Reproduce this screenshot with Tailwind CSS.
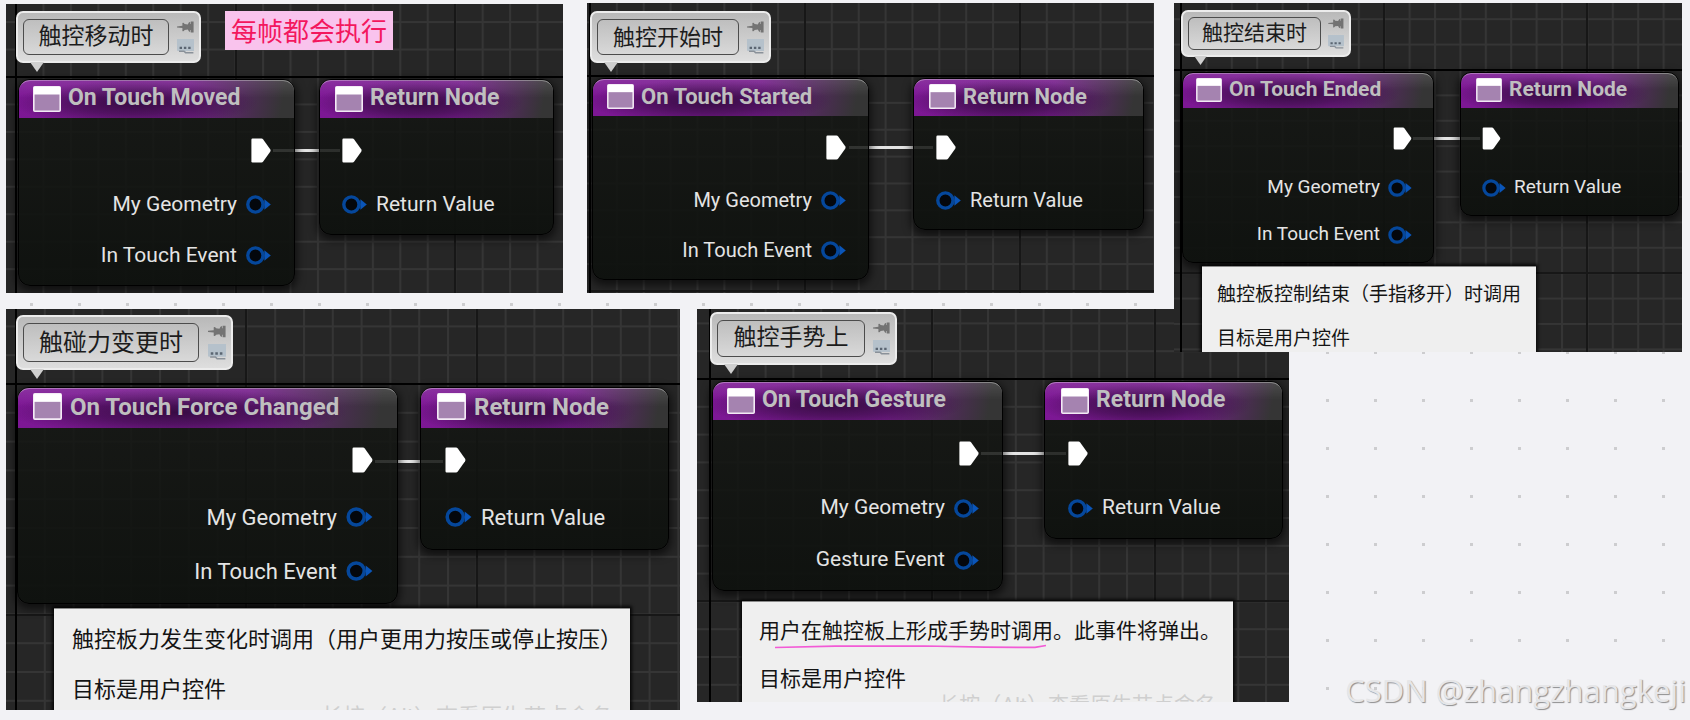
<!DOCTYPE html>
<html lang="zh-CN">
<head>
  <meta charset="UTF-8">
  <title>UMG Touch Events</title>
  <script src="https://cdn.jsdelivr.net/npm/@tailwindcss/browser@4"></script>
</head>
<body class="bg-[#f2f2f5] font-['Roboto','Noto_Sans_CJK_SC',sans-serif]">

  <!-- shared icons -->
  <svg class="hidden">
    <symbol id="window" viewBox="0 0 28 26">
      <rect x="0.8" y="0.8" width="26.4" height="24.4" rx="1" fill="#a583b0" stroke="#f3eaf5" stroke-width="1.6"/>
      <rect x="1" y="1" width="26" height="7.5" fill="#fff"/>
    </symbol>
    <symbol id="exec" viewBox="0 0 20 25">
      <path d="M1.5 .6H10.5Q11.5 .6 12.2 1.5L19.2 11.3Q20 12.5 19.2 13.7L12.2 23.5Q11.5 24.4 10.5 24.4H1.5Q.4 24.4 .4 23.2V1.8Q.4 .6 1.5 .6Z" fill="#fff"/>
    </symbol>
    <symbol id="pin" viewBox="0 0 25 19">
      <circle cx="9.4" cy="9.5" r="7.6" fill="#04070c" stroke="#05479b" stroke-width="3.4"/>
      <path d="M18.4 4.2V14.8L24.8 9.5Z" fill="#0a55b8"/>
    </symbol>
    <symbol id="pushpin" viewBox="0 0 17 12">
      <path d="M0 5.4L5.4 4.8V2Q6.6 1.2 7.6 3L10.8 3.4Q11.6 1 13.2 .8V3H13.8V.6H16.6V11.4H13.8V9H13.2V11.2Q11.6 11 10.8 8.6L7.6 9Q6.6 10.8 5.4 10V6.9L0 6.4Z" fill="#737373"/>
    </symbol>
    <symbol id="note" viewBox="0 0 17 15">
      <path d="M0 0H17V12H9L8 13.6 6.6 12H1Q0 12 0 11Z" fill="#b5c1cb"/>
      <path d="M2.6 7.8H5V10H2.6ZM6.9 7.8H9.3V10H6.9ZM11.2 7.8H13.6V10H11.2Z" fill="#5a6572"/>
      <path d="M2 12.2H7L8.6 13.8H16.4" fill="none" stroke="#8a9199" stroke-width="1.4"/>
    </symbol>
  </svg>

  <main class="relative min-h-screen overflow-hidden">
    <!-- dotted canvas -->
    <svg class="absolute inset-0 w-full h-full">
      <pattern id="dots" x="30" y="15" width="48" height="48" patternUnits="userSpaceOnUse"><rect width="3" height="3" fill="#cdcdcf"/></pattern>
      <rect width="100%" height="100%" fill="url(#dots)"/>
    </svg>

    <!-- On Touch Moved -->
    <section class="absolute left-[6px] top-[4px] w-[557px] h-[289px] bg-[#262626] overflow-hidden">
      <svg class="absolute inset-0 w-full h-full">
        <pattern id="g1" x="9" y="72" width="27.45" height="27.45" patternUnits="userSpaceOnUse"><path d="M0 1H28M1 0V28" stroke="#353535" stroke-width="2"/></pattern>
        <rect width="100%" height="100%" fill="url(#g1)"/>
        <path d="M230 0V289M449 0V289" stroke="#171717" stroke-width="2"/>
        <path d="M0 73H557M10 0V289" stroke="#000" stroke-width="2"/>
      </svg>

      <div class="absolute left-[10px] top-[7px] w-[185px] h-[52px] px-[5px] py-[6px] flex items-center gap-[8px] rounded-[7px] border-2 border-[#ececec] bg-linear-to-b from-[#b9b9b9] to-[#dedede]">
        <div class="flex-1 h-full flex items-center justify-center rounded-[6px] border border-[#4c4c4c] text-[23px] text-[#1c1c1c] whitespace-nowrap">触控移动时</div>
        <div class="flex flex-col gap-[6px]">
          <button aria-label="Pin" class="block"><svg class="w-[17px] h-[12px]"><use href="#pushpin"/></svg></button>
          <button aria-label="Bubble" class="block"><svg class="w-[17px] h-[15px]"><use href="#note"/></svg></button>
        </div>
        <svg class="absolute left-[12px] top-[49px] w-[14px] h-[10px]" viewBox="0 0 14 10"><path d="M0 0H14L7 10Z" fill="#cfcfcf"/></svg>
      </div>
      <p class="absolute left-[219px] top-[7px] px-[6px] pt-[3px] bg-[#f9c3ed] text-[#f3175e] text-[26px] leading-[36px]">每帧都会执行</p>

      <div class="absolute left-[267px] top-[145px] w-[67px] h-[3px] bg-[#e4e4e4]"></div>

      <article class="absolute left-[12px] top-[75px] w-[277px] pb-[4px] rounded-[12px] border border-black bg-linear-to-b from-[#141613]/80 to-[#0e110e]/95 shadow-[0_3px_8px_2px_rgba(0,0,0,0.6)]">
        <header class="h-[38px] pl-[14px] pb-[2px] flex items-center gap-[7px] rounded-t-[11px] border-t border-white/40 bg-[linear-gradient(to_bottom,#ffffff1c,#ffffff00_45%),radial-gradient(ellipse_45%_60%_at_42%_60%,#380c44_0%,#380c4499_50%,#380c4400_100%),linear-gradient(100deg,#7d1795_0%,#751d8b_60%,#353535_95%)]">
          <svg class="w-[28px] h-[26px]"><use href="#window"/></svg>
          <h2 class="text-[23px] font-bold text-[#bfbfbf] whitespace-nowrap">On Touch Moved</h2>
        </header>
        <ul class="pt-[4px] pr-[23px] text-[21px] text-[#e4e4e4]">
          <li class="h-[57px] flex items-center justify-end"><svg class="w-[20px] h-[25px]"><use href="#exec"/></svg></li>
          <li class="h-[51px] flex items-center justify-end gap-[9px]">My Geometry<svg class="w-[25px] h-[19px]"><use href="#pin"/></svg></li>
          <li class="h-[51px] flex items-center justify-end gap-[9px]">In Touch Event<svg class="w-[25px] h-[19px]"><use href="#pin"/></svg></li>
        </ul>
      </article>
      <article class="absolute left-[313px] top-[75px] w-[235px] pb-[4px] rounded-[12px] border border-black bg-linear-to-b from-[#141613]/80 to-[#0e110e]/95 shadow-[0_3px_8px_2px_rgba(0,0,0,0.6)]">
        <header class="h-[38px] pl-[15px] pb-[2px] flex items-center gap-[7px] rounded-t-[11px] border-t border-white/40 bg-[linear-gradient(to_bottom,#ffffff1c,#ffffff00_45%),radial-gradient(ellipse_45%_60%_at_42%_60%,#380c44_0%,#380c4499_50%,#380c4400_100%),linear-gradient(100deg,#7d1795_0%,#751d8b_60%,#353535_95%)]">
          <svg class="w-[28px] h-[26px]"><use href="#window"/></svg>
          <h2 class="text-[23px] font-bold text-[#bfbfbf] whitespace-nowrap">Return Node</h2>
        </header>
        <ul class="pt-[4px] pl-[22px] text-[21px] text-[#e4e4e4]">
          <li class="h-[57px] flex items-center"><svg class="w-[20px] h-[25px]"><use href="#exec"/></svg></li>
          <li class="h-[51px] flex items-center gap-[9px]"><svg class="w-[25px] h-[19px]"><use href="#pin"/></svg>Return Value</li>
        </ul>
      </article>
    </section>

    <!-- On Touch Started -->
    <section class="absolute left-[587px] top-[3px] w-[567px] h-[290px] bg-[#262626] overflow-hidden">
      <svg class="absolute inset-0 w-full h-full">
        <pattern id="g2" x="2" y="72" width="26.87" height="26.87" patternUnits="userSpaceOnUse"><path d="M0 1H28M1 0V28" stroke="#353535" stroke-width="2"/></pattern>
        <rect width="100%" height="100%" fill="url(#g2)"/>
        <path d="M218 0V290M433 0V290M0 288H567" stroke="#171717" stroke-width="2"/>
        <path d="M0 73H567M3 0V290" stroke="#000" stroke-width="2"/>
      </svg>

      <div class="absolute left-[3px] top-[8px] w-[181px] h-[52px] px-[5px] py-[6px] flex items-center gap-[8px] rounded-[7px] border-2 border-[#ececec] bg-linear-to-b from-[#b9b9b9] to-[#dedede]">
        <div class="flex-1 h-full flex items-center justify-center rounded-[6px] border border-[#4c4c4c] text-[22px] text-[#1c1c1c] whitespace-nowrap">触控开始时</div>
        <div class="flex flex-col gap-[6px]">
          <button aria-label="Pin" class="block"><svg class="w-[17px] h-[12px]"><use href="#pushpin"/></svg></button>
          <button aria-label="Bubble" class="block"><svg class="w-[17px] h-[15px]"><use href="#note"/></svg></button>
        </div>
        <svg class="absolute left-[12px] top-[49px] w-[14px] h-[10px]" viewBox="0 0 14 10"><path d="M0 0H14L7 10Z" fill="#cfcfcf"/></svg>
      </div>

      <div class="absolute left-[262px] top-[143px] w-[84px] h-[3px] bg-[#e4e4e4]"></div>

      <article class="absolute left-[5px] top-[75px] w-[277px] pb-[4px] rounded-[12px] border border-black bg-linear-to-b from-[#141613]/80 to-[#0e110e]/95 shadow-[0_3px_8px_2px_rgba(0,0,0,0.6)]">
        <header class="h-[37px] pl-[14px] pb-[4px] flex items-center gap-[7px] rounded-t-[11px] border-t border-white/40 bg-[linear-gradient(to_bottom,#ffffff1c,#ffffff00_45%),radial-gradient(ellipse_45%_60%_at_42%_60%,#380c44_0%,#380c4499_50%,#380c4400_100%),linear-gradient(100deg,#7d1795_0%,#751d8b_60%,#353535_95%)]">
          <svg class="w-[27px] h-[25px]"><use href="#window"/></svg>
          <h2 class="text-[22px] font-bold text-[#bfbfbf] whitespace-nowrap">On Touch Started</h2>
        </header>
        <ul class="pt-[4px] pr-[22px] text-[20px] text-[#e4e4e4]">
          <li class="h-[55px] flex items-center justify-end"><svg class="w-[20px] h-[25px]"><use href="#exec"/></svg></li>
          <li class="h-[50px] flex items-center justify-end gap-[9px]">My Geometry<svg class="w-[25px] h-[19px]"><use href="#pin"/></svg></li>
          <li class="h-[50px] flex items-center justify-end gap-[9px]">In Touch Event<svg class="w-[25px] h-[19px]"><use href="#pin"/></svg></li>
        </ul>
      </article>
      <article class="absolute left-[326px] top-[75px] w-[231px] pb-[4px] rounded-[12px] border border-black bg-linear-to-b from-[#141613]/80 to-[#0e110e]/95 shadow-[0_3px_8px_2px_rgba(0,0,0,0.6)]">
        <header class="h-[37px] pl-[15px] pb-[4px] flex items-center gap-[7px] rounded-t-[11px] border-t border-white/40 bg-[linear-gradient(to_bottom,#ffffff1c,#ffffff00_45%),radial-gradient(ellipse_45%_60%_at_42%_60%,#380c44_0%,#380c4499_50%,#380c4400_100%),linear-gradient(100deg,#7d1795_0%,#751d8b_60%,#353535_95%)]">
          <svg class="w-[27px] h-[25px]"><use href="#window"/></svg>
          <h2 class="text-[22px] font-bold text-[#bfbfbf] whitespace-nowrap">Return Node</h2>
        </header>
        <ul class="pt-[4px] pl-[22px] text-[20px] text-[#e4e4e4]">
          <li class="h-[55px] flex items-center"><svg class="w-[20px] h-[25px]"><use href="#exec"/></svg></li>
          <li class="h-[50px] flex items-center gap-[9px]"><svg class="w-[25px] h-[19px]"><use href="#pin"/></svg>Return Value</li>
        </ul>
      </article>
    </section>

    <!-- On Touch Force Changed -->
    <section class="absolute left-[6px] top-[309px] w-[674px] h-[401px] bg-[#262626] overflow-hidden">
      <svg class="absolute inset-0 w-full h-full">
        <pattern id="g4" x="9" y="74" width="28.8" height="28.8" patternUnits="userSpaceOnUse"><path d="M0 1H29M1 0V29" stroke="#353535" stroke-width="2"/></pattern>
        <rect width="100%" height="100%" fill="url(#g4)"/>
        <path d="M240 0V401M471 0V401M0 306H674" stroke="#171717" stroke-width="2"/>
        <path d="M0 75H674M10 0V401" stroke="#000" stroke-width="2"/>
      </svg>

      <div class="absolute left-[10px] top-[6px] w-[217px] h-[55px] px-[5px] py-[6px] flex items-center gap-[9px] rounded-[7px] border-2 border-[#ececec] bg-linear-to-b from-[#b9b9b9] to-[#dedede]">
        <div class="flex-1 h-full flex items-center justify-center rounded-[6px] border border-[#4c4c4c] text-[24px] text-[#1c1c1c] whitespace-nowrap">触碰力变更时</div>
        <div class="flex flex-col gap-[6px]">
          <button aria-label="Pin" class="block"><svg class="w-[18px] h-[13px]"><use href="#pushpin"/></svg></button>
          <button aria-label="Bubble" class="block"><svg class="w-[18px] h-[16px]"><use href="#note"/></svg></button>
        </div>
        <svg class="absolute left-[12px] top-[52px] w-[14px] h-[10px]" viewBox="0 0 14 10"><path d="M0 0H14L7 10Z" fill="#cfcfcf"/></svg>
      </div>

      <div class="absolute left-[369px] top-[151px] w-[68px] h-[3px] bg-[#e4e4e4]"></div>

      <article class="absolute left-[11px] top-[78px] w-[381px] pb-[5px] rounded-[12px] border border-black bg-linear-to-b from-[#141613]/80 to-[#0e110e]/95 shadow-[0_3px_8px_2px_rgba(0,0,0,0.6)]">
        <header class="h-[40px] pl-[15px] pb-[4px] flex items-center gap-[8px] rounded-t-[11px] border-t border-white/40 bg-[linear-gradient(to_bottom,#ffffff1c,#ffffff00_45%),radial-gradient(ellipse_45%_60%_at_42%_60%,#380c44_0%,#380c4499_50%,#380c4400_100%),linear-gradient(100deg,#7d1795_0%,#751d8b_60%,#353535_95%)]">
          <svg class="w-[29px] h-[27px]"><use href="#window"/></svg>
          <h2 class="text-[24px] font-bold text-[#bfbfbf] whitespace-nowrap">On Touch Force Changed</h2>
        </header>
        <ul class="pt-[2px] pr-[24px] text-[22px] text-[#e4e4e4]">
          <li class="h-[60px] flex items-center justify-end"><svg class="w-[21px] h-[26px]"><use href="#exec"/></svg></li>
          <li class="h-[54px] flex items-center justify-end gap-[9px]">My Geometry<svg class="w-[27px] h-[20px]"><use href="#pin"/></svg></li>
          <li class="h-[54px] flex items-center justify-end gap-[9px]">In Touch Event<svg class="w-[27px] h-[20px]"><use href="#pin"/></svg></li>
        </ul>
      </article>
      <article class="absolute left-[414px] top-[78px] w-[249px] pb-[5px] rounded-[12px] border border-black bg-linear-to-b from-[#141613]/80 to-[#0e110e]/95 shadow-[0_3px_8px_2px_rgba(0,0,0,0.6)]">
        <header class="h-[40px] pl-[16px] pb-[4px] flex items-center gap-[8px] rounded-t-[11px] border-t border-white/40 bg-[linear-gradient(to_bottom,#ffffff1c,#ffffff00_45%),radial-gradient(ellipse_45%_60%_at_42%_60%,#380c44_0%,#380c4499_50%,#380c4400_100%),linear-gradient(100deg,#7d1795_0%,#751d8b_60%,#353535_95%)]">
          <svg class="w-[29px] h-[27px]"><use href="#window"/></svg>
          <h2 class="text-[24px] font-bold text-[#bfbfbf] whitespace-nowrap">Return Node</h2>
        </header>
        <ul class="pt-[2px] pl-[24px] text-[22px] text-[#e4e4e4]">
          <li class="h-[60px] flex items-center"><svg class="w-[21px] h-[26px]"><use href="#exec"/></svg></li>
          <li class="h-[54px] flex items-center gap-[9px]"><svg class="w-[27px] h-[20px]"><use href="#pin"/></svg>Return Value</li>
        </ul>
      </article>

      <div class="absolute left-[48px] top-[299px] w-[576px] px-[18px] pt-[6px] bg-[#efefef] border-t border-[#8a8a8a] text-[22px] leading-[50px] text-[#141414] whitespace-nowrap shadow-[0_0_3px_2px_rgba(0,0,0,0.8)]">
        <p>触控板力发生变化时调用（用户更用力按压或停止按压）</p>
        <p>目标是用户控件</p>
        <p class="text-right leading-[2px] pt-[1px] text-[#cfcfcf]">长按（Alt）查看原生节点命名</p>
      </div>
    </section>

    <!-- On Touch Gesture -->
    <section class="absolute left-[697px] top-[309px] w-[592px] h-[393px] bg-[#262626] overflow-hidden">
      <svg class="absolute inset-0 w-full h-full">
        <pattern id="g5" x="12" y="69" width="27.8" height="27.8" patternUnits="userSpaceOnUse"><path d="M0 1H28M1 0V28" stroke="#353535" stroke-width="2"/></pattern>
        <rect width="100%" height="100%" fill="url(#g5)"/>
        <path d="M235 0V393M458 0V393M0 292H592" stroke="#171717" stroke-width="2"/>
        <path d="M0 70H592M13 0V393" stroke="#000" stroke-width="2"/>
      </svg>

      <div class="absolute left-[13px] top-[3px] w-[187px] h-[53px] px-[5px] py-[6px] flex items-center gap-[8px] rounded-[7px] border-2 border-[#ececec] bg-linear-to-b from-[#b9b9b9] to-[#dedede]">
        <div class="flex-1 h-full flex items-center justify-center rounded-[6px] border border-[#4c4c4c] text-[23px] text-[#1c1c1c] whitespace-nowrap">触控手势上</div>
        <div class="flex flex-col gap-[6px]">
          <button aria-label="Pin" class="block"><svg class="w-[17px] h-[12px]"><use href="#pushpin"/></svg></button>
          <button aria-label="Bubble" class="block"><svg class="w-[17px] h-[15px]"><use href="#note"/></svg></button>
        </div>
        <svg class="absolute left-[12px] top-[50px] w-[14px] h-[10px]" viewBox="0 0 14 10"><path d="M0 0H14L7 10Z" fill="#cfcfcf"/></svg>
      </div>

      <div class="absolute left-[284px] top-[143px] w-[85px] h-[3px] bg-[#e4e4e4]"></div>

      <article class="absolute left-[15px] top-[72px] w-[291px] pb-[4px] rounded-[12px] border border-black bg-linear-to-b from-[#141613]/80 to-[#0e110e]/95 shadow-[0_3px_8px_2px_rgba(0,0,0,0.6)]">
        <header class="h-[38px] pl-[14px] pb-[2px] flex items-center gap-[7px] rounded-t-[11px] border-t border-white/40 bg-[linear-gradient(to_bottom,#ffffff1c,#ffffff00_45%),radial-gradient(ellipse_45%_60%_at_42%_60%,#380c44_0%,#380c4499_50%,#380c4400_100%),linear-gradient(100deg,#7d1795_0%,#751d8b_60%,#353535_95%)]">
          <svg class="w-[28px] h-[26px]"><use href="#window"/></svg>
          <h2 class="text-[23px] font-bold text-[#bfbfbf] whitespace-nowrap">On Touch Gesture</h2>
        </header>
        <ul class="pt-[4px] pr-[23px] text-[21px] text-[#e4e4e4]">
          <li class="h-[58px] flex items-center justify-end"><svg class="w-[20px] h-[25px]"><use href="#exec"/></svg></li>
          <li class="h-[52px] flex items-center justify-end gap-[9px]">My Geometry<svg class="w-[25px] h-[19px]"><use href="#pin"/></svg></li>
          <li class="h-[52px] flex items-center justify-end gap-[9px]">Gesture Event<svg class="w-[25px] h-[19px]"><use href="#pin"/></svg></li>
        </ul>
      </article>
      <article class="absolute left-[347px] top-[72px] w-[239px] pb-[4px] rounded-[12px] border border-black bg-linear-to-b from-[#141613]/80 to-[#0e110e]/95 shadow-[0_3px_8px_2px_rgba(0,0,0,0.6)]">
        <header class="h-[38px] pl-[16px] pb-[2px] flex items-center gap-[7px] rounded-t-[11px] border-t border-white/40 bg-[linear-gradient(to_bottom,#ffffff1c,#ffffff00_45%),radial-gradient(ellipse_45%_60%_at_42%_60%,#380c44_0%,#380c4499_50%,#380c4400_100%),linear-gradient(100deg,#7d1795_0%,#751d8b_60%,#353535_95%)]">
          <svg class="w-[28px] h-[26px]"><use href="#window"/></svg>
          <h2 class="text-[23px] font-bold text-[#bfbfbf] whitespace-nowrap">Return Node</h2>
        </header>
        <ul class="pt-[4px] pl-[23px] text-[21px] text-[#e4e4e4]">
          <li class="h-[58px] flex items-center"><svg class="w-[20px] h-[25px]"><use href="#exec"/></svg></li>
          <li class="h-[52px] flex items-center gap-[9px]"><svg class="w-[25px] h-[19px]"><use href="#pin"/></svg>Return Value</li>
        </ul>
      </article>

      <div class="absolute left-[45px] top-[292px] w-[491px] px-[17px] pt-[5px] bg-[#efefef] border-t border-[#8a8a8a] text-[21px] leading-[48px] text-[#141414] whitespace-nowrap shadow-[0_0_3px_2px_rgba(0,0,0,0.8)]">
        <p>用户在触控板上形成手势时调用。此事件将弹出。</p>
        <p>目标是用户控件</p>
        <p class="text-right leading-[2px] pt-[1px] text-[#cfcfcf]">长按（Alt）查看原生节点命名</p>
        <svg class="absolute left-[33px] top-[42px] w-[272px] h-[5px]" viewBox="0 0 272 5"><path d="M0 3.5L60 2.2 150 2 210 3.2 260 3.4 271 1.5" fill="none" stroke="#f35ad6" stroke-width="1.7"/></svg>
      </div>
    </section>

    <!-- On Touch Ended -->
    <section class="absolute left-[1174px] top-[3px] w-[508px] h-[349px] bg-[#262626] overflow-hidden">
      <svg class="absolute inset-0 w-full h-full">
        <pattern id="g3" x="6" y="66" width="25.4" height="25.4" patternUnits="userSpaceOnUse"><path d="M0 1H26M1 0V26" stroke="#353535" stroke-width="2"/></pattern>
        <rect width="100%" height="100%" fill="url(#g3)"/>
        <path d="M210 0V349M413 0V349M0 270H508" stroke="#171717" stroke-width="2"/>
        <path d="M0 67H508M7 0V349" stroke="#000" stroke-width="2"/>
      </svg>

      <div class="absolute left-[7px] top-[7px] w-[170px] h-[47px] px-[5px] py-[5px] flex items-center gap-[7px] rounded-[7px] border-2 border-[#ececec] bg-linear-to-b from-[#b9b9b9] to-[#dedede]">
        <div class="flex-1 h-full flex items-center justify-center rounded-[6px] border border-[#4c4c4c] text-[21px] text-[#1c1c1c] whitespace-nowrap">触控结束时</div>
        <div class="flex flex-col gap-[6px]">
          <button aria-label="Pin" class="block"><svg class="w-[16px] h-[11px]"><use href="#pushpin"/></svg></button>
          <button aria-label="Bubble" class="block"><svg class="w-[16px] h-[14px]"><use href="#note"/></svg></button>
        </div>
        <svg class="absolute left-[11px] top-[44px] w-[13px] h-[9px]" viewBox="0 0 14 10"><path d="M0 0H14L7 10Z" fill="#cfcfcf"/></svg>
      </div>

      <div class="absolute left-[239px] top-[134px] w-[67px] h-[3px] bg-[#e4e4e4]"></div>

      <article class="absolute left-[8px] top-[69px] w-[252px] pb-[4px] rounded-[11px] border border-black bg-linear-to-b from-[#141613]/80 to-[#0e110e]/95 shadow-[0_3px_8px_2px_rgba(0,0,0,0.6)]">
        <header class="h-[35px] pl-[13px] pb-[2px] flex items-center gap-[7px] rounded-t-[10px] border-t border-white/40 bg-[linear-gradient(to_bottom,#ffffff1c,#ffffff00_45%),radial-gradient(ellipse_45%_60%_at_42%_60%,#380c44_0%,#380c4499_50%,#380c4400_100%),linear-gradient(100deg,#7d1795_0%,#751d8b_60%,#353535_95%)]">
          <svg class="w-[26px] h-[24px]"><use href="#window"/></svg>
          <h2 class="text-[21px] font-bold text-[#bfbfbf] whitespace-nowrap">On Touch Ended</h2>
        </header>
        <ul class="pt-[4px] pr-[21px] text-[19px] text-[#e4e4e4]">
          <li class="h-[52px] flex items-center justify-end"><svg class="w-[19px] h-[23px]"><use href="#exec"/></svg></li>
          <li class="h-[47px] flex items-center justify-end gap-[8px]">My Geometry<svg class="w-[24px] h-[18px]"><use href="#pin"/></svg></li>
          <li class="h-[47px] flex items-center justify-end gap-[8px]">In Touch Event<svg class="w-[24px] h-[18px]"><use href="#pin"/></svg></li>
        </ul>
      </article>
      <article class="absolute left-[286px] top-[69px] w-[219px] pb-[4px] rounded-[11px] border border-black bg-linear-to-b from-[#141613]/80 to-[#0e110e]/95 shadow-[0_3px_8px_2px_rgba(0,0,0,0.6)]">
        <header class="h-[35px] pl-[15px] pb-[2px] flex items-center gap-[7px] rounded-t-[10px] border-t border-white/40 bg-[linear-gradient(to_bottom,#ffffff1c,#ffffff00_45%),radial-gradient(ellipse_45%_60%_at_42%_60%,#380c44_0%,#380c4499_50%,#380c4400_100%),linear-gradient(100deg,#7d1795_0%,#751d8b_60%,#353535_95%)]">
          <svg class="w-[26px] h-[24px]"><use href="#window"/></svg>
          <h2 class="text-[21px] font-bold text-[#bfbfbf] whitespace-nowrap">Return Node</h2>
        </header>
        <ul class="pt-[4px] pl-[21px] text-[19px] text-[#e4e4e4]">
          <li class="h-[52px] flex items-center"><svg class="w-[19px] h-[23px]"><use href="#exec"/></svg></li>
          <li class="h-[47px] flex items-center gap-[8px]"><svg class="w-[24px] h-[18px]"><use href="#pin"/></svg>Return Value</li>
        </ul>
      </article>

      <div class="absolute left-[28px] top-[263px] w-[334px] h-[100px] px-[15px] pt-[6px] bg-[#efefef] border-t border-[#8a8a8a] text-[19px] leading-[44px] text-[#141414] whitespace-nowrap shadow-[0_0_3px_2px_rgba(0,0,0,0.8)]">
        <p>触控板控制结束（手指移开）时调用</p>
        <p>目标是用户控件</p>
      </div>
    </section>

    <p class="absolute right-[4px] bottom-[8px] font-['Open_Sans',sans-serif] text-[31px] leading-[44px] text-[#e6e6e8] [text-shadow:1px_1px_1px_#8e8e90]">CSDN @zhangzhangkeji</p>
  </main>
</body>
</html>
